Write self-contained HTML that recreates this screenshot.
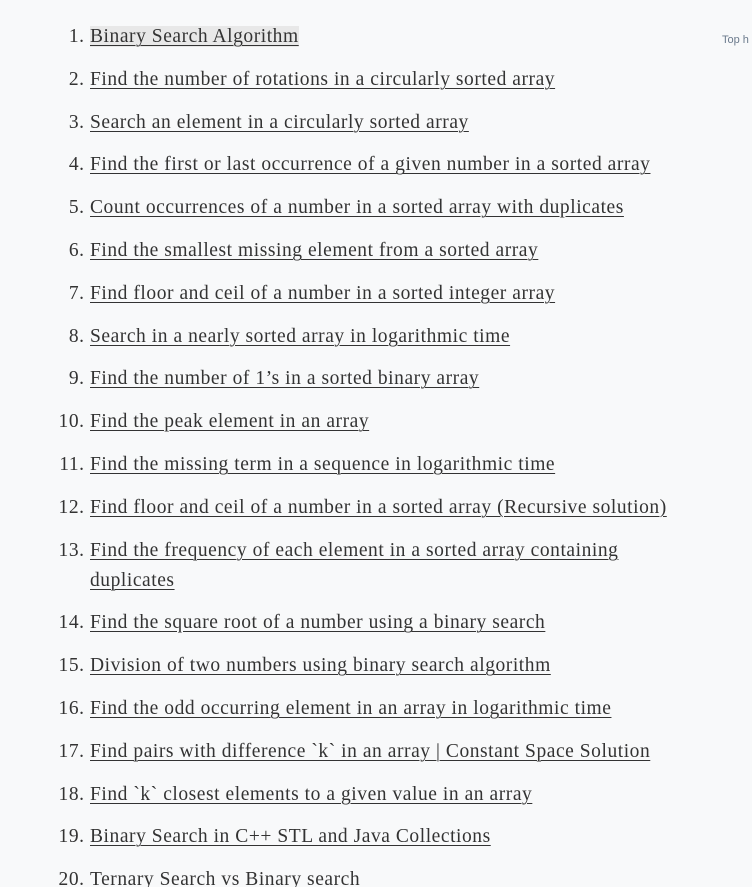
<!DOCTYPE html>
<html><head><meta charset="utf-8"><style>
html,body{margin:0;padding:0;background:#f8f9fa;width:752px;height:887px;overflow:hidden;position:relative}
ol{margin:0;padding:22px 0 0 90px;font-family:"Liberation Serif",serif;font-size:19.5px;letter-spacing:0.55px;line-height:30px;color:#333;}
li{margin-bottom:12.8px;white-space:nowrap;padding-left:0}
li::marker{color:#333}
a{color:#333;text-decoration:underline;text-underline-offset:3px;text-decoration-thickness:1px}
.hl{background:#e8e8e8}
.top{position:absolute;left:722px;top:34px;font-family:"Liberation Sans",sans-serif;font-size:11px;color:#6b7a8c}
</style></head><body>
<ol>
<li><a class="hl">Binary Search Algorithm</a></li>
<li><a>Find the number of rotations in a circularly sorted array</a></li>
<li><a>Search an element in a circularly sorted array</a></li>
<li><a>Find the first or last occurrence of a given number in a sorted array</a></li>
<li><a>Count occurrences of a number in a sorted array with duplicates</a></li>
<li><a>Find the smallest missing element from a sorted array</a></li>
<li><a>Find floor and ceil of a number in a sorted integer array</a></li>
<li><a>Search in a nearly sorted array in logarithmic time</a></li>
<li><a>Find the number of 1’s in a sorted binary array</a></li>
<li><a>Find the peak element in an array</a></li>
<li><a>Find the missing term in a sequence in logarithmic time</a></li>
<li><a>Find floor and ceil of a number in a sorted array (Recursive solution)</a></li>
<li><a>Find the frequency of each element in a sorted array containing<br>duplicates</a></li>
<li><a>Find the square root of a number using a binary search</a></li>
<li><a>Division of two numbers using binary search algorithm</a></li>
<li><a>Find the odd occurring element in an array in logarithmic time</a></li>
<li><a>Find pairs with difference `k` in an array | Constant Space Solution</a></li>
<li><a>Find `k` closest elements to a given value in an array</a></li>
<li><a>Binary Search in C++ STL and Java Collections</a></li>
<li><a>Ternary Search vs Binary search</a></li>
</ol>
<div class="top">Top h</div>
</body></html>
